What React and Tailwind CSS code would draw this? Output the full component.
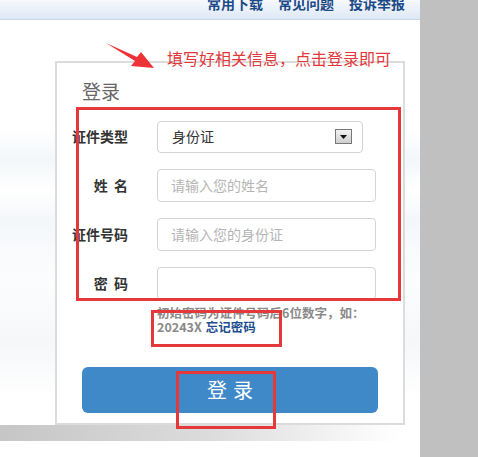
import React from 'react';

const font = { fontFamily: '"Microsoft YaHei", "Noto Sans CJK SC", "Liberation Sans", sans-serif' };

const Field = ({ label, children }) => (
  <div className="flex items-center h-[49px]">
    <div className="w-[71px] text-right text-[14px] font-bold text-[#333] whitespace-pre">{label}</div>
    <div className="ml-[29px]">{children}</div>
  </div>
);

const TextInput = ({ placeholder }) => (
  <div className="w-[219px] h-[33px] border border-[#d4d4d4] rounded-[4px] bg-white flex items-center pl-[13px] text-[14px] text-[#b5b5b5]">
    {placeholder}
  </div>
);

export default function App() {
  return (
    <div className="w-[478px] h-[457px] flex overflow-hidden bg-white" style={font}>
      <div className="w-[420px] flex flex-col relative">
        {/* top bar */}
        <div className="h-[20px] overflow-hidden border-b border-[#c9d6e6] bg-[linear-gradient(#f6f9fd,#dde8f5)] flex justify-end pr-[15px] gap-[15px]">
          {['常用下载', '常见问题', '投诉举报'].map((t) => (
            <span key={t} className="-mt-[4px] text-[14px] leading-[14px] font-bold text-[#1c4a86]">{t}</span>
          ))}
        </div>

        <div className="flex-1 flex flex-col bg-[linear-gradient(180deg,#fff_0px,#fff_110px,#f3f7fa_140px,#fff_170px,#f4f7fa_200px,#fcfdfe_260px,#f5f7f9_320px,#fff_380px)]">
          <div className="ml-[55px] mt-[41px] w-[350px] h-[364px] border-2 border-[#dcdcdc] bg-white flex flex-col">
            <div className="pl-[25px] pt-[16px] text-[19px] leading-[24px] text-[#666]">登录</div>
            <div className="mt-[9px]">
              <Field label="证件类型">
                <div className="w-[206px] h-[32px] border border-[#d4d4d4] rounded-[4px] bg-white flex items-center justify-between pl-[14px] pr-[10px] text-[14px] text-[#333]">
                  <span>身份证</span>
                  <span className="w-[17px] h-[15px] border border-[#777] bg-[linear-gradient(#f2f2f2,#cfcfcf)] flex items-center justify-center">
                    <svg width="7" height="4" viewBox="0 0 7 4"><path d="M0 0h7L3.5 4z" fill="#111" /></svg>
                  </span>
                </div>
              </Field>
              <Field label="姓  名"><TextInput placeholder="请输入您的姓名" /></Field>
              <Field label="证件号码"><TextInput placeholder="请输入您的身份证" /></Field>
              <Field label="密  码"><TextInput placeholder="" /></Field>
            </div>
            <div className="ml-[100px] -mt-[2px] text-[12.5px] leading-[14px] font-bold text-[#8a8a8a]">
              <div>初始密码为证件号码后6位数字，如：</div>
              <div className="flex gap-[4px]">
                <span>20243X</span>
                <span className="text-[#1d4f8f]">忘记密码</span>
              </div>
            </div>
            <button className="ml-[25px] mt-[33px] w-[296px] h-[46px] rounded-[6px] bg-[#3f89c9] text-white text-[20px] tracking-[6px] pl-[6px]">
              登录
            </button>
          </div>
          <div className="h-[16px] bg-[linear-gradient(90deg,#c6c6c6,#dcdcdc_50%,#fff_95%)]" />
          <div className="flex-1 bg-white" />
        </div>

        {/* annotations */}
        <svg className="absolute left-0 top-0 pointer-events-none" width="420" height="457">
          <polygon points="106,43 137,57 141,52 154,68 131,66 135,61" fill="#ee3338" />
        </svg>
        <div className="absolute left-[167px] top-[48px] text-[16px] leading-[20px] text-[#e0393b] whitespace-nowrap">
          填写好相关信息，点击登录即可
        </div>
        <div className="absolute left-[76px] top-[107px] w-[325px] h-[194px] border-[3px] border-[#e5383b]" />
        <div className="absolute left-[151px] top-[310px] w-[131px] h-[37px] border-[3px] border-[#e5383b]" />
        <div className="absolute left-[176px] top-[371px] w-[100px] h-[58px] border-[3px] border-[#e5383b]" />
      </div>
      <div className="flex-1 bg-[#c0c0c0]" />
    </div>
  );
}
